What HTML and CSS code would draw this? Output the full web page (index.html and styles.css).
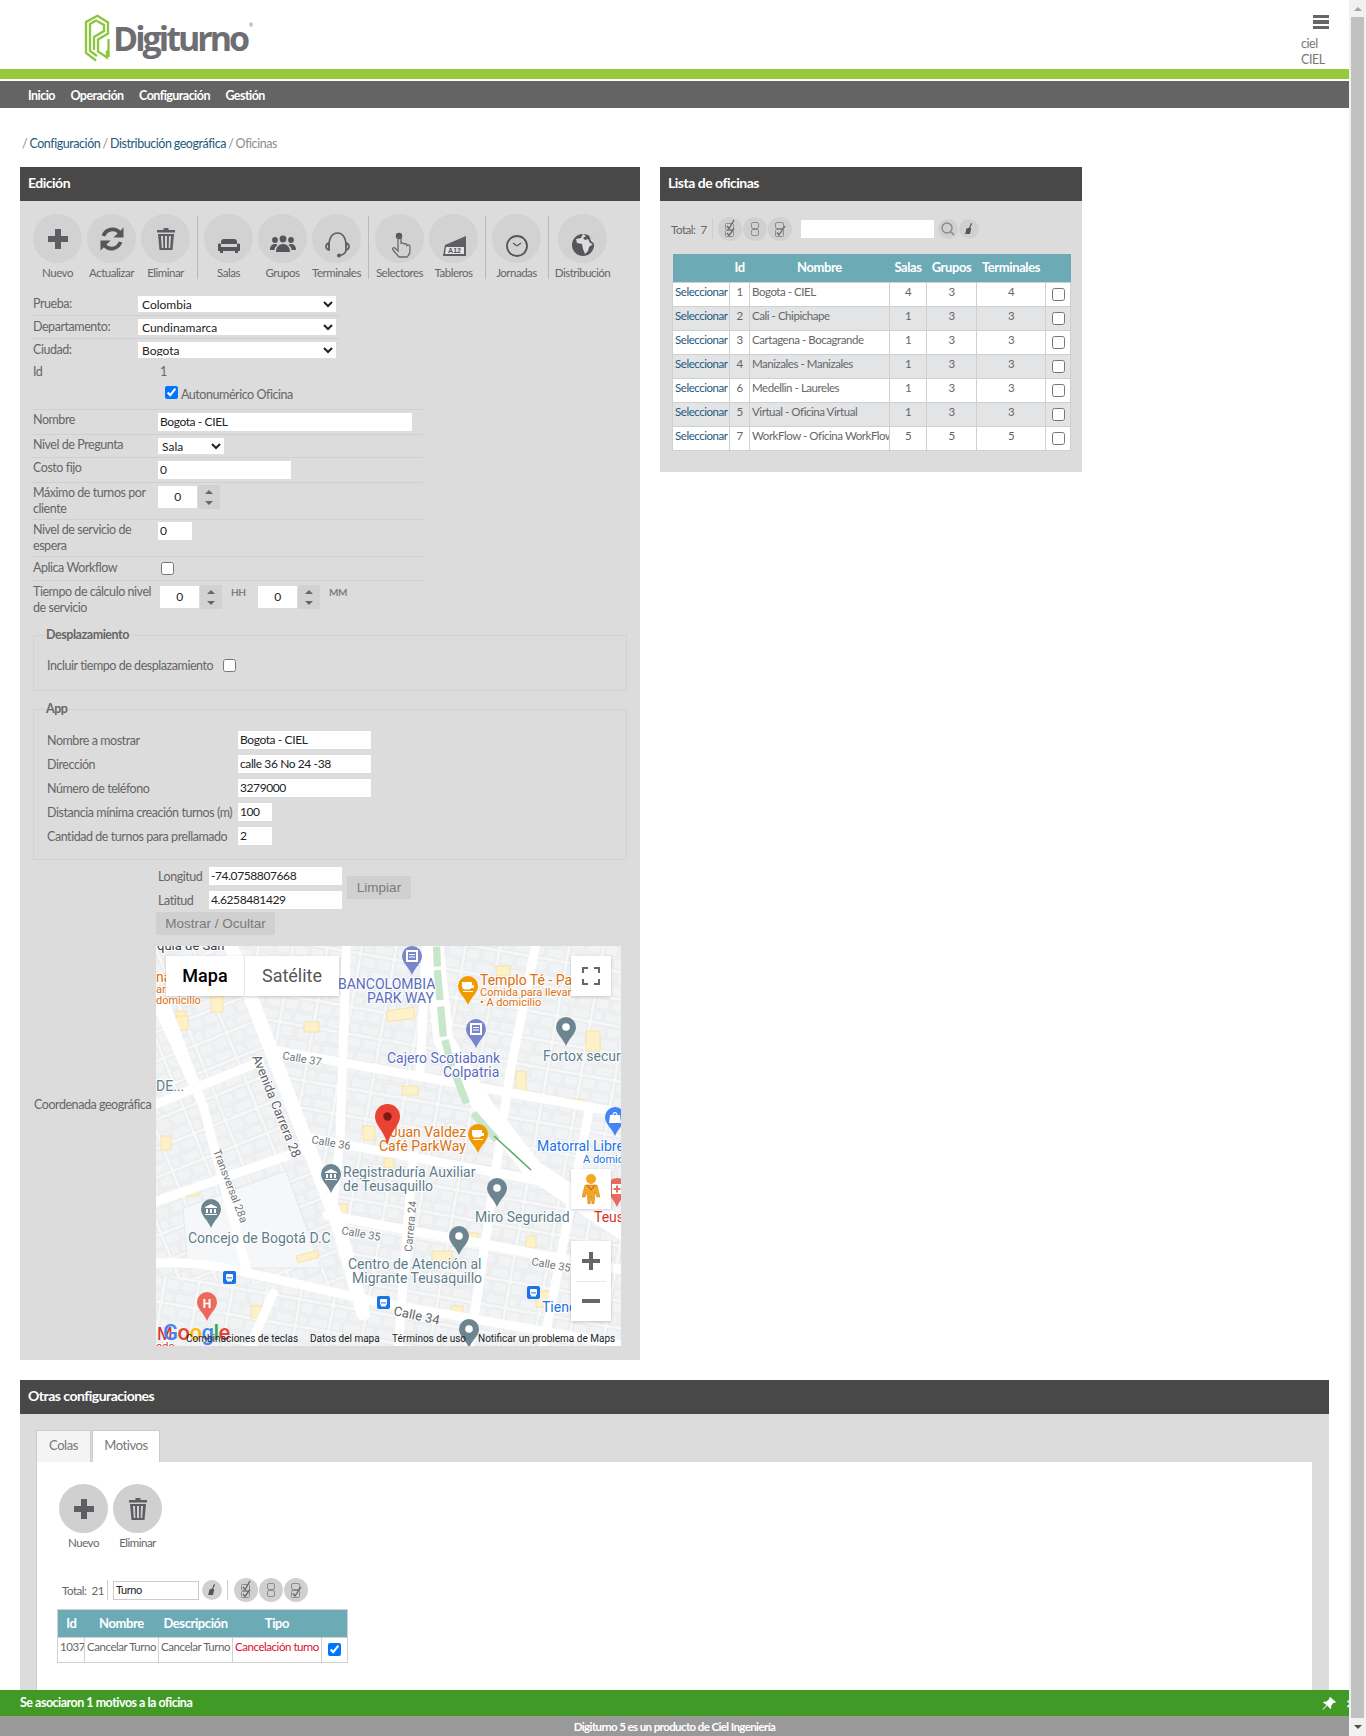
FILE: index.html
```html
<!DOCTYPE html>
<html lang="es">
<head>
<meta charset="utf-8">
<title>Oficinas - Digiturno</title>
<link rel="stylesheet" href="styles.css">
</head>
<body>
<svg class="defs" width="0" height="0" aria-hidden="true">
  <defs>
    <symbol id="i-plus" viewBox="0 0 48 48"><path d="M21 14h6v7h7v6h-7v7h-6v-7h-7v-6h7z" fill="#5d5d62"/></symbol>
    <symbol id="i-refresh" viewBox="0 0 48 48"><g fill="none" stroke="#55555a" stroke-width="3.8"><path d="M15.500 21a9.500 9.500 0 0 1 16-3.500"/><path d="M32.500 27a9.500 9.500 0 0 1-16 3.500"/></g><path d="M35.500 12.500v10h-10zM12.500 35.500v-10h10z" fill="#55555a"/></symbol>
    <symbol id="i-trash" viewBox="0 0 48 48"><path d="M21.500 13h5v2h6.500v2.500h-18V15h6.500zM16 19h16l-1.500 16h-13zM19 21l.8 12h1.600l-.4-12zM23 21v12h2V21zM27 21l-.4 12h1.600l.8-12z" fill="#5d5d62" fill-rule="evenodd"/></symbol>
    <symbol id="i-sofa" viewBox="0 0 48 48"><path transform="translate(0 2)" d="M16 25c0-2 1-3 3-3h10c2 0 3 1 3 3v2H16zM13 27c1-1 2.500-.5 3 .5V30h16v-2.500c.5-1 2-1.500 3-.5v7H13zM15 34h3v2h-3zM30 34h3v2h-3z" fill="#55555a"/></symbol>
    <symbol id="i-group" viewBox="0 0 48 48"><g fill="#55555a" transform="translate(0 3)"><circle cx="24" cy="21" r="3.400"/><circle cx="16" cy="22" r="2.900"/><circle cx="32" cy="22" r="2.900"/><path d="M17 34c0-5 3-8 7-8s7 3 7 8z"/><path d="M11 32c0-4 2-6 5-6 1 0 2 .3 2.500 1-2 1.500-3 3-3 5zM37 32c0-4-2-6-5-6-1 0-2 .3-2.500 1 2 1.500 3 3 3 5z"/></g></symbol>
    <symbol id="i-headset" viewBox="0 0 48 48"><g transform="translate(0 5)"><g fill="none" stroke="#5d5d62" stroke-width="1.700"><path d="M16 27c-.5-9 3.500-14 8.500-14s9 5 8.500 14"/><path d="M16 23c-2 .5-3 2-3 3.500s1 3 3 3.500zM33 23c2 .5 3 2 3 3.500s-1 3-3 3.500z"/><path d="M33 30c0 3-3 5-6 5"/></g><circle cx="26" cy="35.500" r="2" fill="#5d5d62"/></g></symbol>
    <symbol id="i-hand" viewBox="0 0 48 48"><g transform="translate(0 6)"><circle cx="23" cy="15" r="3.200" fill="#55555a"/><path d="M22 17v13l-3-3c-1.500-1-3 .5-2 2l6 7h8c2-2 3-4 3-6v-4c0-2-2-2.500-3-1.500 0-2-2.200-2.500-3-1 0-2-2.500-2-3-.8V17c0-1.500-3-1.500-3 0z" fill="none" stroke="#6a6a6e" stroke-width="1.300"/></g></symbol>
    <symbol id="i-board" viewBox="0 0 48 48"><g transform="translate(1 5)"><path d="M14 25l21-9v20H12z" fill="#5d5d62"/><path d="M15 27h18v7H14z" fill="#e4e4e4"/><text x="23.500" y="33" class="board-text">A12</text></g></symbol>
    <symbol id="i-clock" viewBox="0 0 48 48"><g transform="translate(0 5)"><circle cx="24" cy="26" r="10" fill="none" stroke="#55555a" stroke-width="1.800"/><path d="M24 26l-4-3M24 26l4-3" stroke="#55555a" stroke-width="1.200"/></g></symbol>
    <symbol id="i-globe" viewBox="0 0 48 48"><g transform="translate(0 5)"><circle cx="24" cy="25" r="11" fill="#55555a"/><path d="M24 14l-2 4-5 1 1 4 5 1 1 5 2 5 3-3 1-4 4-3-3-1-2-4-3 1-2-2 3-2zM30 15l5 6 1 3-4-3z" fill="#dcdcdc"/></g></symbol>
    <symbol id="m-all" viewBox="0 0 24 24"><g fill="none" stroke="#8d8d8d" stroke-width="1"><rect x="7.500" y="6.500" width="8" height="6" rx="1"/><rect x="7.500" y="13.500" width="8" height="6" rx="1"/></g><path d="M9 9l2 2.500L16 3M9 16l2 2.500 5-7" fill="none" stroke="#666" stroke-width="1.300"/></symbol>
    <symbol id="m-none" viewBox="0 0 24 24"><g fill="none" stroke="#8d8d8d" stroke-width="1"><rect x="8.500" y="5.500" width="7" height="6" rx="1.500"/><rect x="8.500" y="12.500" width="7" height="6" rx="1.500"/></g></symbol>
    <symbol id="m-inv" viewBox="0 0 24 24"><g fill="none" stroke="#8d8d8d" stroke-width="1"><rect x="7.500" y="5.500" width="8" height="6" rx="1.500"/><rect x="7.500" y="12.500" width="8" height="7" rx="1"/></g><path d="M9 15.500l2 2.500 6-9" fill="none" stroke="#666" stroke-width="1.300"/></symbol>
    <symbol id="m-search" viewBox="0 0 20 20"><circle cx="9" cy="9" r="5" fill="none" stroke="#8a8a8a" stroke-width="1.400"/><path d="M12.500 12.500L16 16" stroke="#8a8a8a" stroke-width="1.600"/></symbol>
    <symbol id="m-broom" viewBox="0 0 20 20"><path d="M12 4l1.200.7-2 3.800 1 1-1.200 5.500H6c1-1.500 1-4 1.500-5.500l2.500-.8z" fill="#555"/></symbol>
    <symbol id="pin" viewBox="0 0 20 29"><path d="M10 0a10 10 0 0 1 10 10c0 7-7 11-10 19C7 21 0 17 0 10A10 10 0 0 1 10 0z"/></symbol>
    <symbol id="g-dot" viewBox="0 0 20 29"><circle cx="10" cy="10" r="3.800" fill="#fff"/></symbol>
    <symbol id="g-cup" viewBox="0 0 20 29"><path d="M4 6h10v3h2v3h-3c-.5 1-1 1.500-2 1.500H7c-2 0-3-2-3-4zM5 15h10v1H5z" fill="#fff"/></symbol>
    <symbol id="g-bank" viewBox="0 0 20 29"><path d="M10 5l6 3v1H4V8zM5 10h2v4H5zM9 10h2v4H9zM13 10h2v4h-2zM4 15h12v1H4z" fill="#fff"/></symbol>
    <symbol id="g-atm" viewBox="0 0 20 29"><path d="M4 4h12v12H4zM6 6v8h8V6zM7 8h6v1H7zM7 10.500h6v1H7z" fill="#fff" fill-rule="evenodd"/></symbol>
    <symbol id="g-bag" viewBox="0 0 20 29"><path d="M5 8h10l1 8H4zM7.500 8c0-4 5-4 5 0h-1c0-2.500-3-2.500-3 0z" fill="#fff"/></symbol>
    <symbol id="g-plus" viewBox="0 0 20 29"><path d="M5 6h10v10H5zM9 7.500v2.500H6.500v2H9v2.500h2V12h2.500v-2H11V7.500z" fill="#fff" fill-rule="evenodd"/></symbol>
    <symbol id="bus" viewBox="0 0 13 13"><rect width="13" height="13" rx="2" fill="#1a73e8"/><rect x="3" y="3" width="7" height="6" rx="1" fill="#fff"/><rect x="4" y="9" width="5" height="1.500" fill="#fff"/><rect x="3.800" y="6.400" width="5.400" height="1" fill="#1a73e8"/></symbol>
    <pattern id="blocks" width="34" height="27" patternUnits="userSpaceOnUse" patternTransform="rotate(10)">
      <g fill="#f1f3f4" stroke="#e0e2e5" stroke-width=".8"><rect x="1" y="1" width="14" height="11"/><rect x="17" y="1" width="14" height="11"/><rect x="1" y="14" width="9" height="10"/><rect x="12" y="14" width="19" height="10"/></g>
    </pattern>
    <pattern id="blocks-w" width="34" height="27" patternUnits="userSpaceOnUse" patternTransform="rotate(-22)">
      <g fill="#f1f3f4" stroke="#e0e2e5" stroke-width=".8"><rect x="1" y="1" width="14" height="11"/><rect x="17" y="1" width="14" height="11"/><rect x="1" y="14" width="9" height="10"/><rect x="12" y="14" width="19" height="10"/></g>
    </pattern>
  </defs>
</svg>
<div class="window">
  <div class="page">
    <header class="top">
      <div class="logo">
        <svg class="logo-mark" viewBox="0 0 26 48" width="26" height="48" aria-hidden="true">
          <g fill="none" stroke="#8cc63f" stroke-width="2.300">
            <path d="M14 1.500L2 8v31l10 7.500"/>
            <path d="M13 6L6 10v27l7 5"/>
            <path d="M13 1.500l11 7v11l-10 6v12l9 6v-7"/>
            <path d="M13 7l7 4v6l-10 6v13"/>
            <path d="M24.500 25v18"/>
          </g>
        </svg>
        <span class="logo-text">Digiturno</span><span class="logo-reg">®</span>
      </div>
      <div class="user">
        <div class="burger"><i></i><i></i><i></i></div>
        <div class="user-name">ciel</div>
        <div class="user-name">CIEL</div>
      </div>
    </header>
    <div class="greenbar"></div>
    <nav class="nav"><a>Inicio</a><a>Operación</a><a>Configuración</a><a>Gestión</a></nav>
    <div class="crumbs">/ <a>Configuración</a> / <a>Distribución geográfica</a> / Oficinas</div>

    <div class="columns">
      <section class="panel panel-edit">
        <h2 class="panel-title">Edición</h2>
        <div class="panel-body edit-body">
          <div class="tools">
            <div class="tool"><span class="circle"><svg width="48" height="48"><use href="#i-plus"/></svg></span><span class="tool-label">Nuevo</span></div>
            <div class="tool"><span class="circle"><svg width="48" height="48"><use href="#i-refresh"/></svg></span><span class="tool-label">Actualizar</span></div>
            <div class="tool"><span class="circle"><svg width="48" height="48"><use href="#i-trash"/></svg></span><span class="tool-label">Eliminar</span></div>
            <span class="tool-sep"></span>
            <div class="tool"><span class="circle"><svg width="48" height="48"><use href="#i-sofa"/></svg></span><span class="tool-label">Salas</span></div>
            <div class="tool"><span class="circle"><svg width="48" height="48"><use href="#i-group"/></svg></span><span class="tool-label">Grupos</span></div>
            <div class="tool"><span class="circle"><svg width="48" height="48"><use href="#i-headset"/></svg></span><span class="tool-label">Terminales</span></div>
            <span class="tool-sep"></span>
            <div class="tool"><span class="circle"><svg width="48" height="48"><use href="#i-hand"/></svg></span><span class="tool-label">Selectores</span></div>
            <div class="tool"><span class="circle"><svg width="48" height="48"><use href="#i-board"/></svg></span><span class="tool-label">Tableros</span></div>
            <span class="tool-sep"></span>
            <div class="tool"><span class="circle"><svg width="48" height="48"><use href="#i-clock"/></svg></span><span class="tool-label">Jornadas</span></div>
            <span class="tool-sep"></span>
            <div class="tool tool-wide"><span class="circle"><svg width="48" height="48"><use href="#i-globe"/></svg></span><span class="tool-label">Distribución</span></div>
          </div>

          <div class="geo-rows">
            <div class="row geo-row line"><label class="geo-label">Prueba:</label><select class="sel-wide"><option>Colombia</option></select></div>
            <div class="row geo-row line"><label class="geo-label">Departamento:</label><select class="sel-wide"><option>Cundinamarca</option></select></div>
            <div class="row geo-row"><label class="geo-label">Ciudad:</label><select class="sel-wide"><option>Bogota</option></select></div>
          </div>

          <div class="form-rows">
            <div class="row id-row"><label class="f-label">Id</label><span class="id-value">1</span></div>
            <div class="row auto-row line"><input type="checkbox" class="check" checked><span class="auto-text">Autonumérico Oficina</span></div>
            <div class="row f-row f-name line"><label class="f-label">Nombre</label><input class="inp w254" value="Bogota - CIEL"></div>
            <div class="row f-row f-level line"><label class="f-label">Nivel de Pregunta</label><select class="sel-small"><option>Sala</option></select></div>
            <div class="row f-row f-name line"><label class="f-label">Costo fijo</label><input class="inp w133" value="0"></div>
            <div class="row f-row f-max line"><label class="f-label two">Máximo de turnos por cliente</label><span class="spin"><input class="inp spin-inp" value="0"><span class="spin-btn"><i class="up"></i><i class="down"></i></span></span></div>
            <div class="row f-row f-wait line"><label class="f-label two">Nivel de servicio de espera</label><input class="inp w34" value="0"></div>
            <div class="row f-row f-flow line"><label class="f-label f-label-flow">Aplica Workflow</label><input type="checkbox" class="check check-flow"></div>
            <div class="row f-row f-time"><label class="f-label f-label-time two">Tiempo de cálculo nivel de servicio</label><span class="spin"><input class="inp spin-inp" value="0"><span class="spin-btn"><i class="up"></i><i class="down"></i></span></span><span class="unit">HH</span><span class="spin"><input class="inp spin-inp" value="0"><span class="spin-btn"><i class="up"></i><i class="down"></i></span></span><span class="unit">MM</span></div>
          </div>

          <fieldset class="group group-travel">
            <legend>Desplazamiento</legend>
            <div class="travel-line"><span>Incluir tiempo de desplazamiento</span><input type="checkbox" class="check"></div>
          </fieldset>

          <fieldset class="group group-app">
            <legend>App</legend>
            <div class="app-row"><label>Nombre a mostrar</label><input class="inp w133" value="Bogota - CIEL"></div>
            <div class="app-row"><label>Dirección</label><input class="inp w133" value="calle 36 No 24 -38"></div>
            <div class="app-row"><label>Número de teléfono</label><input class="inp w133" value="3279000"></div>
            <div class="app-row"><label>Distancia mínima creación turnos (m)</label><input class="inp w34" value="100"></div>
            <div class="app-row"><label>Cantidad de turnos para prellamado</label><input class="inp w34" value="2"></div>
          </fieldset>

          <div class="coords">
            <div class="coord-inputs">
              <div class="coord-row"><label>Longitud</label><input class="inp w133" value="-74.0758807668"></div>
              <div class="coord-row"><label>Latitud</label><input class="inp w133" value="4.6258481429"></div>
            </div>
            <button class="btn btn-clear" type="button">Limpiar</button>
          </div>
          <button class="btn btn-show" type="button">Mostrar / Ocultar</button>

          <div class="map-row">
            <label class="map-label">Coordenada geográfica</label>
            <div class="map">
              <svg class="map-art" width="465" height="400" viewBox="0 0 465 400">
                <rect width="465" height="400" fill="#f7f8f8"/>
                <rect width="465" height="400" fill="url(#blocks)"/>
                <polygon points="0,0 75,0 181,271 200,345 0,330" fill="#f7f8f8"/>
                <polygon points="0,0 75,0 181,271 200,345 0,330" fill="url(#blocks-w)"/>
                <polygon points="27,262 130,225 165,322 32,322" fill="#f6f7f8" stroke="#e3e5e8" stroke-width=".8"/>
                <g fill="#fdf1c9" stroke="#f6e0a5" stroke-width=".8">
                  <rect x="230" y="65" width="28" height="11" transform="rotate(-8 230 65)"/>
                  <rect x="148" y="76" width="15" height="10"/><rect x="20" y="65" width="10" height="16"/>
                  <rect x="246" y="140" width="16" height="9"/><rect x="207" y="180" width="12" height="14"/>
                  <rect x="228" y="212" width="10" height="10"/><rect x="178" y="258" width="13" height="14"/>
                  <rect x="312" y="287" width="10" height="10"/><rect x="370" y="290" width="10" height="12"/>
                  <rect x="276" y="305" width="20" height="10"/><rect x="360" y="125" width="10" height="20"/>
                  <rect x="430" y="85" width="14" height="20"/><rect x="380" y="345" width="14" height="16"/>
                  <rect x="140" y="310" width="22" height="7" transform="rotate(-15 140 310)"/><rect x="95" y="360" width="12" height="12"/>
                  <rect x="30" y="240" width="12" height="10"/><rect x="295" y="360" width="12" height="12"/>
                  <rect x="410" y="153" width="18" height="8"/><rect x="340" y="20" width="14" height="10"/>
                  <rect x="20" y="70" width="12" height="14"/><rect x="55" y="50" width="12" height="16"/><rect x="5" y="190" width="10" height="14"/>
                </g>
                <g transform="translate(-6 -6) scale(.3333)" fill="none" stroke="#fff" stroke-linecap="round">
                  <g stroke-width="27">
                    <path d="M370 330L1450 525"/><path d="M460 590L1450 775"/><path d="M530 825L1450 995"/>
                    <path d="M0 500L330 365"/><path d="M0 790L460 630"/>
                    <path d="M0 970Q150 960 300 1000L700 1090L1450 1220"/>
                    <path d="M590 0L570 600L545 830"/><path d="M830 0L810 400"/><path d="M790 640L745 1218"/>
                    <path d="M1080 400L960 1218"/><path d="M1320 500L1180 1218"/><path d="M1160 0L1080 400"/>
                    <path d="M50 200L160 500L290 990"/><path d="M0 150L160 500"/>
                    <path d="M300 1218L370 1060"/>
                  </g>
                  <path d="M240 10L560 840L640 1120" stroke-width="42"/>
                  <path d="M850 10L880 300L1000 500L1150 690L1450 890" stroke-width="60"/>
                </g>
                <g transform="translate(-6 -6) scale(.3333)" fill="none" stroke="#c8e6c9" stroke-linecap="butt" stroke-width="22">
                  <path d="M860 20L862 80M862 90L870 180M872 200L880 290M885 300L905 380M915 400L950 490"/>
                  <path d="M970 520L1040 600"/>
                </g>
                <path d="M338 190L375 224" stroke="#5fa865" stroke-width="1.500" fill="none"/>

                <use href="#pin" x="246" y="0" width="20" height="29" fill="#7986cb"/><use href="#g-atm" x="246" y="0" width="20" height="29"/>
                <use href="#pin" x="310" y="73" width="20" height="29" fill="#7986cb"/><use href="#g-atm" x="310" y="73" width="20" height="29"/>
                <use href="#pin" x="302" y="30" width="20" height="29" fill="#f29900"/><use href="#g-cup" x="302" y="30" width="20" height="29"/>
                <use href="#pin" x="312" y="178" width="20" height="29" fill="#f29900"/><use href="#g-cup" x="312" y="178" width="20" height="29"/>
                <use href="#pin" x="400" y="71" width="20" height="29" fill="#6d8591"/><use href="#g-dot" x="400" y="71" width="20" height="29"/>
                <use href="#pin" x="331" y="232" width="20" height="29" fill="#6d8591"/><use href="#g-dot" x="331" y="232" width="20" height="29"/>
                <use href="#pin" x="293" y="280" width="20" height="29" fill="#6d8591"/><use href="#g-dot" x="293" y="280" width="20" height="29"/>
                <use href="#pin" x="303" y="373" width="20" height="29" fill="#6d8591"/><use href="#g-dot" x="303" y="373" width="20" height="29"/>
                <use href="#pin" x="165" y="218" width="20" height="29" fill="#6d8591"/><use href="#g-bank" x="165" y="218" width="20" height="29"/>
                <use href="#pin" x="45" y="253" width="20" height="29" fill="#6d8591"/><use href="#g-bank" x="45" y="253" width="20" height="29"/>
                <use href="#pin" x="449" y="161" width="20" height="29" fill="#4285f4"/><use href="#g-bag" x="449" y="161" width="20" height="29"/>
                <use href="#pin" x="41" y="346" width="20" height="29" fill="#ea6a5e"/>
                <text class="pin-h" x="51" y="362">H</text>
                <use href="#pin" x="451" y="232" width="20" height="29" fill="#ea6a5e"/><use href="#g-plus" x="451" y="232" width="20" height="29"/>
                <use href="#bus" x="67" y="325" width="13" height="13"/>
                <use href="#bus" x="221" y="350" width="13" height="13"/>
                <use href="#bus" x="371" y="340" width="13" height="13"/>

                <g class="mt mt-dark"><text x="1" y="4">quía de San</text></g>
                <g class="mt mt-blue">
                  <text x="182" y="43">BANCOLOMBIA</text><text x="211" y="57">PARK WAY</text>
                  <text x="231" y="117">Cajero Scotiabank</text><text x="287" y="131">Colpatria</text>
                </g>
                <g class="mt mt-orange">
                  <text x="324" y="39">Templo Té - Pa</text>
                  <text class="mt-sm" x="324" y="50">Comida para llevar</text>
                  <text class="mt-sm" x="324" y="60">• A domicilio</text>
                  <text x="0" y="36">na</text><text class="mt-sm" x="0" y="47">ar.</text><text class="mt-sm" x="0" y="58">domicilio</text>
                  <text x="234" y="191">Juan Valdez</text><text x="223" y="205">Café ParkWay</text>
                </g>
                <g class="mt mt-grey">
                  <text x="387" y="115">Fortox secur</text><text x="0" y="145">DE...</text>
                  <text x="187" y="231">Registraduría Auxiliar</text><text x="187" y="245">de Teusaquillo</text>
                  <text x="319" y="276">Miro Seguridad</text><text x="32" y="297">Concejo de Bogotá D.C</text>
                  <text x="192" y="323">Centro de Atención al</text><text x="196" y="337">Migrante Teusaquillo</text>
                </g>
                <g class="mt mt-bright">
                  <text x="381" y="205">Matorral Libre</text><text class="mt-sm" x="427" y="217">A domic</text>
                  <text x="386" y="366">Tienda</text>
                </g>
                <text class="mt mt-red" x="438" y="276">Teus</text>
                <g class="mt mt-road">
                  <text class="road-lg" transform="translate(96 111) rotate(68)">Avenida Carrera 28</text>
                  <text transform="translate(126 113) rotate(10)">Calle 37</text>
                  <text transform="translate(155 197) rotate(10)">Calle 36</text>
                  <text transform="translate(185 288) rotate(10)">Calle 35</text>
                  <text transform="translate(375 319) rotate(10)">Calle 35</text>
                  <text class="road-lg" transform="translate(237 369) rotate(12)">Calle 34</text>
                  <text transform="translate(256 306) rotate(-85)">Carrera 24</text>
                  <text transform="translate(57 205) rotate(69)">Transversal 28a</text>
                </g>
                <text class="mt mt-red map-m" x="1" y="394">M</text>
                <text class="mt mt-red mt-sm" x="0" y="404">ode</text>
                <text class="g-logo" x="7" y="394"><tspan fill="#4285f4">G</tspan><tspan fill="#ea4335">o</tspan><tspan fill="#fbbc04">o</tspan><tspan fill="#4285f4">g</tspan><tspan fill="#34a853">l</tspan><tspan fill="#ea4335">e</tspan></text>
                <g class="m-foot">
                  <text x="30" y="396">Combinaciones de teclas</text>
                  <text x="154" y="396">Datos del mapa</text>
                  <text x="236" y="396">Términos de uso</text>
                  <text x="322" y="396">Notificar un problema de Maps</text>
                </g>
                <path d="M231.500 158c-7 0-12.500 5.500-12.500 12.500 0 9 9.500 14 12.500 28.500 3-14.500 12.500-19.500 12.500-28.500 0-7-5.500-12.500-12.500-12.500z" fill="#ea4335"/>
                <circle cx="231.500" cy="170.500" r="4.200" fill="#7a1a10"/>
              </svg>
              <div class="map-type"><span class="mt-on">Mapa</span><span class="mt-off">Satélite</span></div>
              <div class="map-ctl map-full">
                <svg width="18" height="18" viewBox="0 0 18 18"><path d="M1 6V1h5M12 1h5v5M17 12v5h-5M6 17H1v-5" fill="none" stroke="#666" stroke-width="2"/></svg>
              </div>
              <div class="map-ctl map-peg">
                <svg width="18" height="30" viewBox="0 0 18 30"><circle cx="9" cy="5" r="5" fill="#f5a623"/><path d="M3 11h12l3 12h-3l-2-5-1 12H10l-1-8-1 8H6L5 18l-2 5H0z" fill="#f5a623" stroke="#c77f0e" stroke-width=".5"/><path d="M5 11l4 5 4-5" fill="none" stroke="#c5502a" stroke-width="1"/></svg>
              </div>
              <div class="map-ctl map-zoom">
                <svg width="18" height="18" viewBox="0 0 18 18"><path d="M7 0h4v7h7v4h-7v7H7v-7H0V7h7z" fill="#666"/></svg>
                <span class="zoom-line"></span>
                <svg width="18" height="18" viewBox="0 0 18 18"><path d="M0 7h18v4H0z" fill="#666"/></svg>
              </div>
            </div>
          </div>
        </div>
      </section>

      <section class="panel panel-list">
        <h2 class="panel-title">Lista de oficinas</h2>
        <div class="panel-body list-body">
          <div class="list-tools">
            <span class="total">Total:&nbsp; 7</span><span class="mini-sep"></span>
            <span class="mini"><svg width="24" height="24"><use href="#m-all"/></svg></span>
            <span class="mini"><svg width="24" height="24"><use href="#m-none"/></svg></span>
            <span class="mini"><svg width="24" height="24"><use href="#m-inv"/></svg></span>
            <input class="inp list-search">
            <span class="mini mini-s"><svg width="20" height="20"><use href="#m-search"/></svg></span>
            <span class="mini mini-s"><svg width="20" height="20"><use href="#m-broom"/></svg></span>
          </div>
          <table class="grid grid-offices">
            <colgroup><col class="c57"><col class="c20"><col class="c140"><col class="c37"><col class="c50"><col class="c69"><col class="c25"></colgroup>
            <thead><tr><th></th><th>Id</th><th>Nombre</th><th>Salas</th><th>Grupos</th><th>Terminales</th><th></th></tr></thead>
            <tbody>
              <tr><td class="link">Seleccionar</td><td class="ctr">1</td><td>Bogota - CIEL</td><td class="ctr">4</td><td class="ctr">3</td><td class="ctr">4</td><td class="ctr"><input type="checkbox" class="check"></td></tr>
              <tr><td class="link">Seleccionar</td><td class="ctr">2</td><td>Cali - Chipichape</td><td class="ctr">1</td><td class="ctr">3</td><td class="ctr">3</td><td class="ctr"><input type="checkbox" class="check"></td></tr>
              <tr><td class="link">Seleccionar</td><td class="ctr">3</td><td>Cartagena - Bocagrande</td><td class="ctr">1</td><td class="ctr">3</td><td class="ctr">3</td><td class="ctr"><input type="checkbox" class="check"></td></tr>
              <tr><td class="link">Seleccionar</td><td class="ctr">4</td><td>Manizales - Manizales</td><td class="ctr">1</td><td class="ctr">3</td><td class="ctr">3</td><td class="ctr"><input type="checkbox" class="check"></td></tr>
              <tr><td class="link">Seleccionar</td><td class="ctr">6</td><td>Medellin - Laureles</td><td class="ctr">1</td><td class="ctr">3</td><td class="ctr">3</td><td class="ctr"><input type="checkbox" class="check"></td></tr>
              <tr><td class="link">Seleccionar</td><td class="ctr">5</td><td>Virtual - Oficina Virtual</td><td class="ctr">1</td><td class="ctr">3</td><td class="ctr">3</td><td class="ctr"><input type="checkbox" class="check"></td></tr>
              <tr><td class="link">Seleccionar</td><td class="ctr">7</td><td>WorkFlow - Oficina WorkFlow</td><td class="ctr">5</td><td class="ctr">5</td><td class="ctr">5</td><td class="ctr"><input type="checkbox" class="check"></td></tr>
            </tbody>
          </table>
        </div>
      </section>
    </div>

    <section class="panel panel-other">
      <h2 class="panel-title">Otras configuraciones</h2>
      <div class="panel-body other-body">
        <div class="tabs"><span class="tab">Colas</span><span class="tab tab-on">Motivos</span></div>
        <div class="tab-content">
          <div class="tools tools-tab">
            <div class="tool"><span class="circle"><svg width="48" height="48"><use href="#i-plus"/></svg></span><span class="tool-label">Nuevo</span></div>
            <div class="tool"><span class="circle"><svg width="48" height="48"><use href="#i-trash"/></svg></span><span class="tool-label">Eliminar</span></div>
          </div>
          <div class="reason-tools">
            <span class="total total-r">Total:&nbsp; 21</span><span class="mini-sep"></span>
            <input class="inp reason-search" value="Turno">
            <span class="mini mini-s mini-broom"><svg width="20" height="20"><use href="#m-broom"/></svg></span>
            <span class="mini-sep mini-sep-r"></span>
            <span class="mini"><svg width="24" height="24"><use href="#m-all"/></svg></span>
            <span class="mini"><svg width="24" height="24"><use href="#m-none"/></svg></span>
            <span class="mini"><svg width="24" height="24"><use href="#m-inv"/></svg></span>
          </div>
          <table class="grid grid-reasons">
            <colgroup><col class="c27"><col class="c74"><col class="c74"><col class="c89"><col class="c26"></colgroup>
            <thead><tr><th>Id</th><th>Nombre</th><th>Descripción</th><th>Tipo</th><th></th></tr></thead>
            <tbody>
              <tr><td>1037</td><td>Cancelar Turno</td><td>Cancelar Turno</td><td class="red">Cancelación turno</td><td class="ctr"><input type="checkbox" class="check" checked></td></tr>
            </tbody>
          </table>
        </div>
      </div>
    </section>

    <div class="notice">
      <span>Se asociaron 1 motivos a la oficina</span>
      <svg class="pin-icon" width="14" height="14" viewBox="0 0 14 14"><path d="M8 0l6 5-1.500 1-1-.3L9 9l.3 2-1 1-3-3.500L1 13l-.5-.5 4-4.500L1 5.500l1-1 2 .2L7.500 2 7 1z" fill="#fff"/></svg>
      <span class="notice-x">×</span>
    </div>
    <footer class="foot">Digiturno 5 es un producto de Ciel Ingeniería</footer>
  </div>
  <aside class="scrollbar"><i class="sb-up"></i><span class="sb-thumb"></span><i class="sb-down"></i></aside>
</div>
</body>
</html>
```

FILE: styles.css
```css
* { box-sizing: border-box; }
html, body { margin: 0; padding: 0; height: 1736px; overflow: hidden; }
body { font-family: Lato, "Open Sans", sans-serif; font-size: 12.5px; letter-spacing: -0.45px; color: #666; background: #fff; }
.defs { position: absolute; }
.window { display: flex; height: 1736px; }
.page { position: relative; width: 1349px; height: 1736px; overflow: hidden; flex: none; }

/* scrollbar */
.scrollbar { width: 17px; background: #f1f1f1; display: flex; flex-direction: column; align-items: center; }
.sb-up { width: 0; height: 0; border: 4px solid transparent; border-top: 0; border-bottom: 4px solid #a3a3a3; margin: 7px 0 6px; }
.sb-thumb { width: 13px; flex: 1; background: #c1c1c1; }
.sb-down { width: 0; height: 0; border: 4px solid transparent; border-bottom: 0; border-top: 4px solid #505050; margin: 7px 0 7px; }

/* header */
.top { height: 69px; display: flex; justify-content: space-between; }
.logo { display: flex; align-items: flex-start; padding: 14px 0 0 84px; }
.logo-mark { flex: none; }
.logo-text { font-family: "Open Sans", sans-serif; font-weight: 700; font-size: 34px; line-height: 48px; letter-spacing: -3px; color: #6d6e71; margin-left: 3px; }
.logo-reg { font-size: 5px; color: #777; margin: 8px 0 0 2px; }
.user { width: 48px; padding-top: 15px; }
.burger { width: 16px; margin-left: 12px; display: flex; flex-direction: column; gap: 2px; margin-bottom: 7px; }
.burger i { height: 3.330px; background: #666; display: block; }
.user-name { line-height: 16px; color: #777; }
.greenbar { height: 10px; background: #97c93a; }
.nav { margin-top: 2px; height: 27px; background: #646464; padding: 2px 0 0 28px; display: flex; align-items: center; gap: 15.500px; color: #fff; font-weight: 700; letter-spacing: -0.55px; }
.crumbs { height: 59px; padding: 28px 0 0 22px; line-height: 16px; color: #8c8c8c; word-spacing: -0.5px; }
.crumbs a { color: #25597a; }

/* panels */
.columns { display: flex; align-items: flex-start; gap: 20px; padding-left: 20px; }
.panel-title { margin: 0; height: 34px; background: #484848; color: #fff; font-size: 14px; font-weight: 700; line-height: 32px; padding-left: 8px; letter-spacing: -0.5px; }
.panel-body { background: #dcdcdc; }
.panel-edit { width: 620px; }
.panel-list { width: 422px; }
.edit-body { height: 1159px; padding-top: 13px; }

/* round tools */
.tools { display: flex; padding-left: 13px; height: 79px; }
.tool { width: 49px; margin-right: 5px; display: flex; flex-direction: column; align-items: center; }
.tool-wide { margin-left: 3px; }
.circle { width: 49px; height: 49px; border-radius: 50%; background: #d0d0d0; display: flex; align-items: center; justify-content: center; flex: none; }
.edit-body .circle { background: #d2d2d2; }
.tool-label { white-space: nowrap; line-height: 16px; margin-top: 2px; color: #666; font-size: 11.500px; letter-spacing: -0.5px; }
.tool-sep { width: 1px; height: 63px; margin: 2px 6px 0 2px; background: #b9b9b9; flex: none; }
.board-text { font-family: "Liberation Sans", sans-serif; font-size: 7px; font-weight: 700; fill: #555; text-anchor: middle; letter-spacing: 0; }

/* form */
.row { display: flex; align-items: flex-start; margin-left: 11px; }
.line { border-bottom: 1px solid #d0d0d0; }
.geo-rows { width: 319px; }
.geo-row { height: 23px; padding: 3px 0 0 2px; width: 308px; }
.geo-label { width: 105px; line-height: 15px; flex: none; }
select { font-family: Lato, "Open Sans", sans-serif; font-size: 12px; color: #222; border: 0; background: #fff; padding: 0 0 2px; border-radius: 0; }
.sel-wide { width: 198px; height: 16px; }
.sel-small { width: 66px; height: 16px; }
.inp { height: 18px; border: 0; background: #fff; padding: 0 2px 2px; font-family: Lato, "Open Sans", sans-serif; font-size: 12px; letter-spacing: -0.4px; color: #222; outline: 0; border-radius: 0; }
.w254 { width: 254px; }
.w133 { width: 133px; }
.w34 { width: 34px; }
.form-rows { width: 403px; }
.form-rows .row { width: 392px; padding-left: 2px; }
.id-row { height: 19px; align-items: center; }
.f-label { width: 125px; flex: none; line-height: 16px; }
.id-value { margin-left: 2px; }
.auto-row { height: 29px; align-items: flex-start; padding-left: 134px !important; }
.check { width: 13px; height: 13px; margin: 0; flex: none; }
.auto-row .check { margin-top: 5px; }
.auto-text { margin: 6px 0 0 3px; line-height: 16px; }
.f-row { padding-top: 3px; }
.f-name { height: 25px; }
.f-level { height: 23px; }
.f-level .f-label, .f-name .f-label { line-height: 14px; }
.f-max { height: 37px; padding-top: 2px; }
.f-wait { height: 37px; padding-top: 2px; }
.f-flow { height: 24px; padding-top: 5px; }
.f-flow .check { margin-left: 3px; }
.f-label-flow { line-height: 12px; }
.f-time { height: 39px; padding-top: 3px; }
.f-label-time { width: 127px; }
.f-time .spin { margin-top: 1px; }
.two { line-height: 16px; }
.spin { display: flex; height: 24px; align-items: center; flex: none; }
.spin-inp { width: 39px; text-align: center; height: 22px; }
.spin-btn { width: 22px; height: 24px; margin-left: 1px; background: #d2d2d2; display: flex; flex-direction: column; align-items: center; justify-content: center; gap: 7px; }
.spin-btn i { width: 0; height: 0; border: 4px solid transparent; display: block; }
.spin-btn .up { border-top: 0; border-bottom: 4px solid #666; }
.spin-btn .down { border-bottom: 0; border-top: 4px solid #666; }
.unit { font-size: 10px; font-weight: 700; color: #808080; width: 36px; padding: 1px 0 0 9px; line-height: 14px; }

/* fieldsets */
.group { margin: 7px 0 0 13px; padding: 0 0 0 13px; width: 594px; border: 1px solid #d2d2d2; min-width: 0; }
.group legend { padding: 0; margin-left: -1px; font-weight: 700; line-height: 16px; color: #666; }
.group-travel { height: 64px; padding-top: 14px; }
.travel-line { display: flex; align-items: center; height: 16px; gap: 10px; }
.group-app { margin-top: 10px; height: 159px; padding-top: 11px; }
.app-row { display: flex; align-items: center; height: 24px; }
.app-row label { width: 191px; flex: none; }

/* coordinates */
.coords { display: flex; margin: 7px 0 0 138px; }
.coord-inputs { width: 189px; }
.coord-row { display: flex; align-items: center; height: 18px; margin-bottom: 6px; }
.coord-row label { width: 51px; flex: none; }
.btn { background: #d0d0d0; color: #7a7a7a; border: 0; padding: 0; font-family: "Liberation Sans", Arial, sans-serif; font-size: 13.500px; letter-spacing: 0; }
.btn-clear { width: 64px; height: 23px; margin: 9px 0 0 0; }
.btn-show { display: block; width: 119px; height: 23px; margin: -3px 0 0 136px; }
.map-row { display: flex; align-items: center; margin: 11px 0 0 14px; }
.map-label { width: 122px; flex: none; white-space: nowrap; margin-bottom: 84px; }
.map { position: relative; width: 465px; height: 400px; overflow: hidden; flex: none; }
.map-art { display: block; }
.mt { font-family: Roboto, sans-serif; font-size: 14px; letter-spacing: 0; paint-order: stroke; stroke: #fff; stroke-width: 2px; stroke-linejoin: round; }
.mt-sm { font-size: 11px; }
.mt-dark { fill: #3c4043; font-size: 13px; }
.mt-blue { fill: #5a6bc0; }
.mt-orange { fill: #dd6f0e; }
.mt-grey { fill: #607d8b; }
.mt-bright { fill: #1a73e8; }
.mt-red { fill: #d93025; }
.mt-road { fill: #70757a; font-size: 11px; }
.road-lg { font-size: 13px; fill: #5f6368; }
.map-m { font-size: 18px; stroke: none; }
.pin-h { font-family: Roboto, sans-serif; font-size: 12px; font-weight: 700; fill: #fff; text-anchor: middle; letter-spacing: 0; }
.g-logo { font-family: Roboto, sans-serif; font-size: 22px; font-weight: 500; letter-spacing: -0.5px; }
.m-foot { font-family: Roboto, sans-serif; font-size: 10px; letter-spacing: 0; fill: #222; }
.map-type { position: absolute; left: 10px; top: 10px; height: 40px; display: flex; background: #fff; box-shadow: 0 1px 3px rgba(0,0,0,.2); font-family: Roboto, sans-serif; font-size: 18px; letter-spacing: 0; line-height: 40px; }
.mt-on { width: 79px; text-align: center; color: #000; font-weight: 500; border-right: 1px solid #e6e6e6; }
.mt-off { width: 94px; text-align: center; color: #565656; }
.map-ctl { position: absolute; left: 415px; width: 40px; background: #fff; box-shadow: 0 1px 3px rgba(0,0,0,.2); display: flex; flex-direction: column; align-items: center; justify-content: center; }
.map-full { top: 10px; height: 40px; }
.map-peg { top: 223px; height: 40px; }
.map-zoom { top: 295px; height: 80px; justify-content: space-between; padding: 11px 0; }
.zoom-line { width: 30px; height: 1px; background: #e6e6e6; }

/* list */
.list-body { height: 271px; padding: 16px 0 0 11px; }
.list-tools { display: flex; align-items: center; height: 24px; }
.total { width: 41px; white-space: nowrap; flex: none; font-size: 11.500px; }
.mini-sep { width: 1px; height: 20px; background: #cfcfcf; margin-right: 5px; flex: none; }
.mini { width: 24px; height: 24px; border-radius: 50%; background: #d0d0d0; margin-right: 1px; display: flex; align-items: center; justify-content: center; flex: none; }
.mini-s { width: 20px; height: 20px; }
.list-search { width: 133px; margin: 0 4px 0 8px; }
.grid { border-collapse: collapse; table-layout: fixed; }
.grid-offices { width: 398px; margin: 13px 0 0 1px; }
.grid th { background: #6cabb6; color: #fff; font-weight: 700; padding: 0 0 1px; font-size: 13px; letter-spacing: -0.4px; }
.grid td { background: #fff; border: 1px solid #d0d0d0; padding: 0 2px; color: #666; white-space: nowrap; overflow: hidden; vertical-align: top; line-height: 18px; font-size: 11.500px; letter-spacing: -0.45px; }
.grid tbody tr:nth-child(even) td { background: #e2e4e6; }
.grid-offices thead tr { height: 28px; }
.grid-offices tbody tr { height: 24px; }
.grid td.ctr { text-align: center; }
.grid td.link { color: #25597a; }
.grid .check { margin-top: 5px; }
.c57 { width: 57px; } .c20 { width: 20px; } .c140 { width: 140px; } .c37 { width: 37px; } .c50 { width: 50px; } .c69 { width: 69px; } .c25 { width: 25px; }
.c27 { width: 27px; } .c74 { width: 74px; } .c89 { width: 89px; } .c26 { width: 26px; }

/* others */
.panel-other { margin: 20px 0 0 20px; width: 1309px; }
.other-body { padding: 16px 17px 0 16px; height: 400px; }
.tabs { display: flex; height: 32px; }
.tab { width: 55px; height: 32px; margin-right: 1px; background: #f4f4f4; border: 1px solid #ccc; border-bottom: 0; text-align: center; line-height: 29px; font-size: 13px; color: #777; }
.tab-on { width: 68px; background: #fff; }
.tab-content { background: #fff; border-left: 1px solid #ccc; margin-left: 0; height: 352px; padding: 22px 0 0 20px; }
.tools-tab { padding-left: 2px; height: 67px; }
.reason-tools { display: flex; align-items: center; height: 24px; margin: 27px 0 0 5px; }
.total-r { width: 45px; }
.reason-search { width: 86px; height: 19px; border: 1px solid #ccc; font-size: 11px; margin-right: 3px; padding-bottom: 1px; }
.mini-broom { margin-right: 5px; }
.mini-sep-r { margin-right: 6px; }
.grid-reasons { width: 291px; margin: 7px 0 0 0; border: 1px solid #d0d0d0; }
.grid-reasons thead tr { height: 28px; }
.grid-reasons tbody tr { height: 25px; }
.grid td.red { color: #d8102e; }

/* bottom */
.notice { position: absolute; left: 0; right: 0; bottom: 20px; height: 26px; background: #429a26; color: #fff; font-weight: 700; line-height: 26px; padding-left: 20px; display: flex; align-items: center; letter-spacing: -0.5px; }
.pin-icon { position: absolute; left: 1322px; top: 7px; }
.notice-x { position: absolute; left: 1346px; top: 0; font-size: 16px; }
.foot { position: absolute; left: 0; right: 0; bottom: 0; height: 20px; background: #999; color: #fff; text-align: center; font-weight: 700; line-height: 22px; font-size: 11.500px; letter-spacing: -0.6px; }
```
